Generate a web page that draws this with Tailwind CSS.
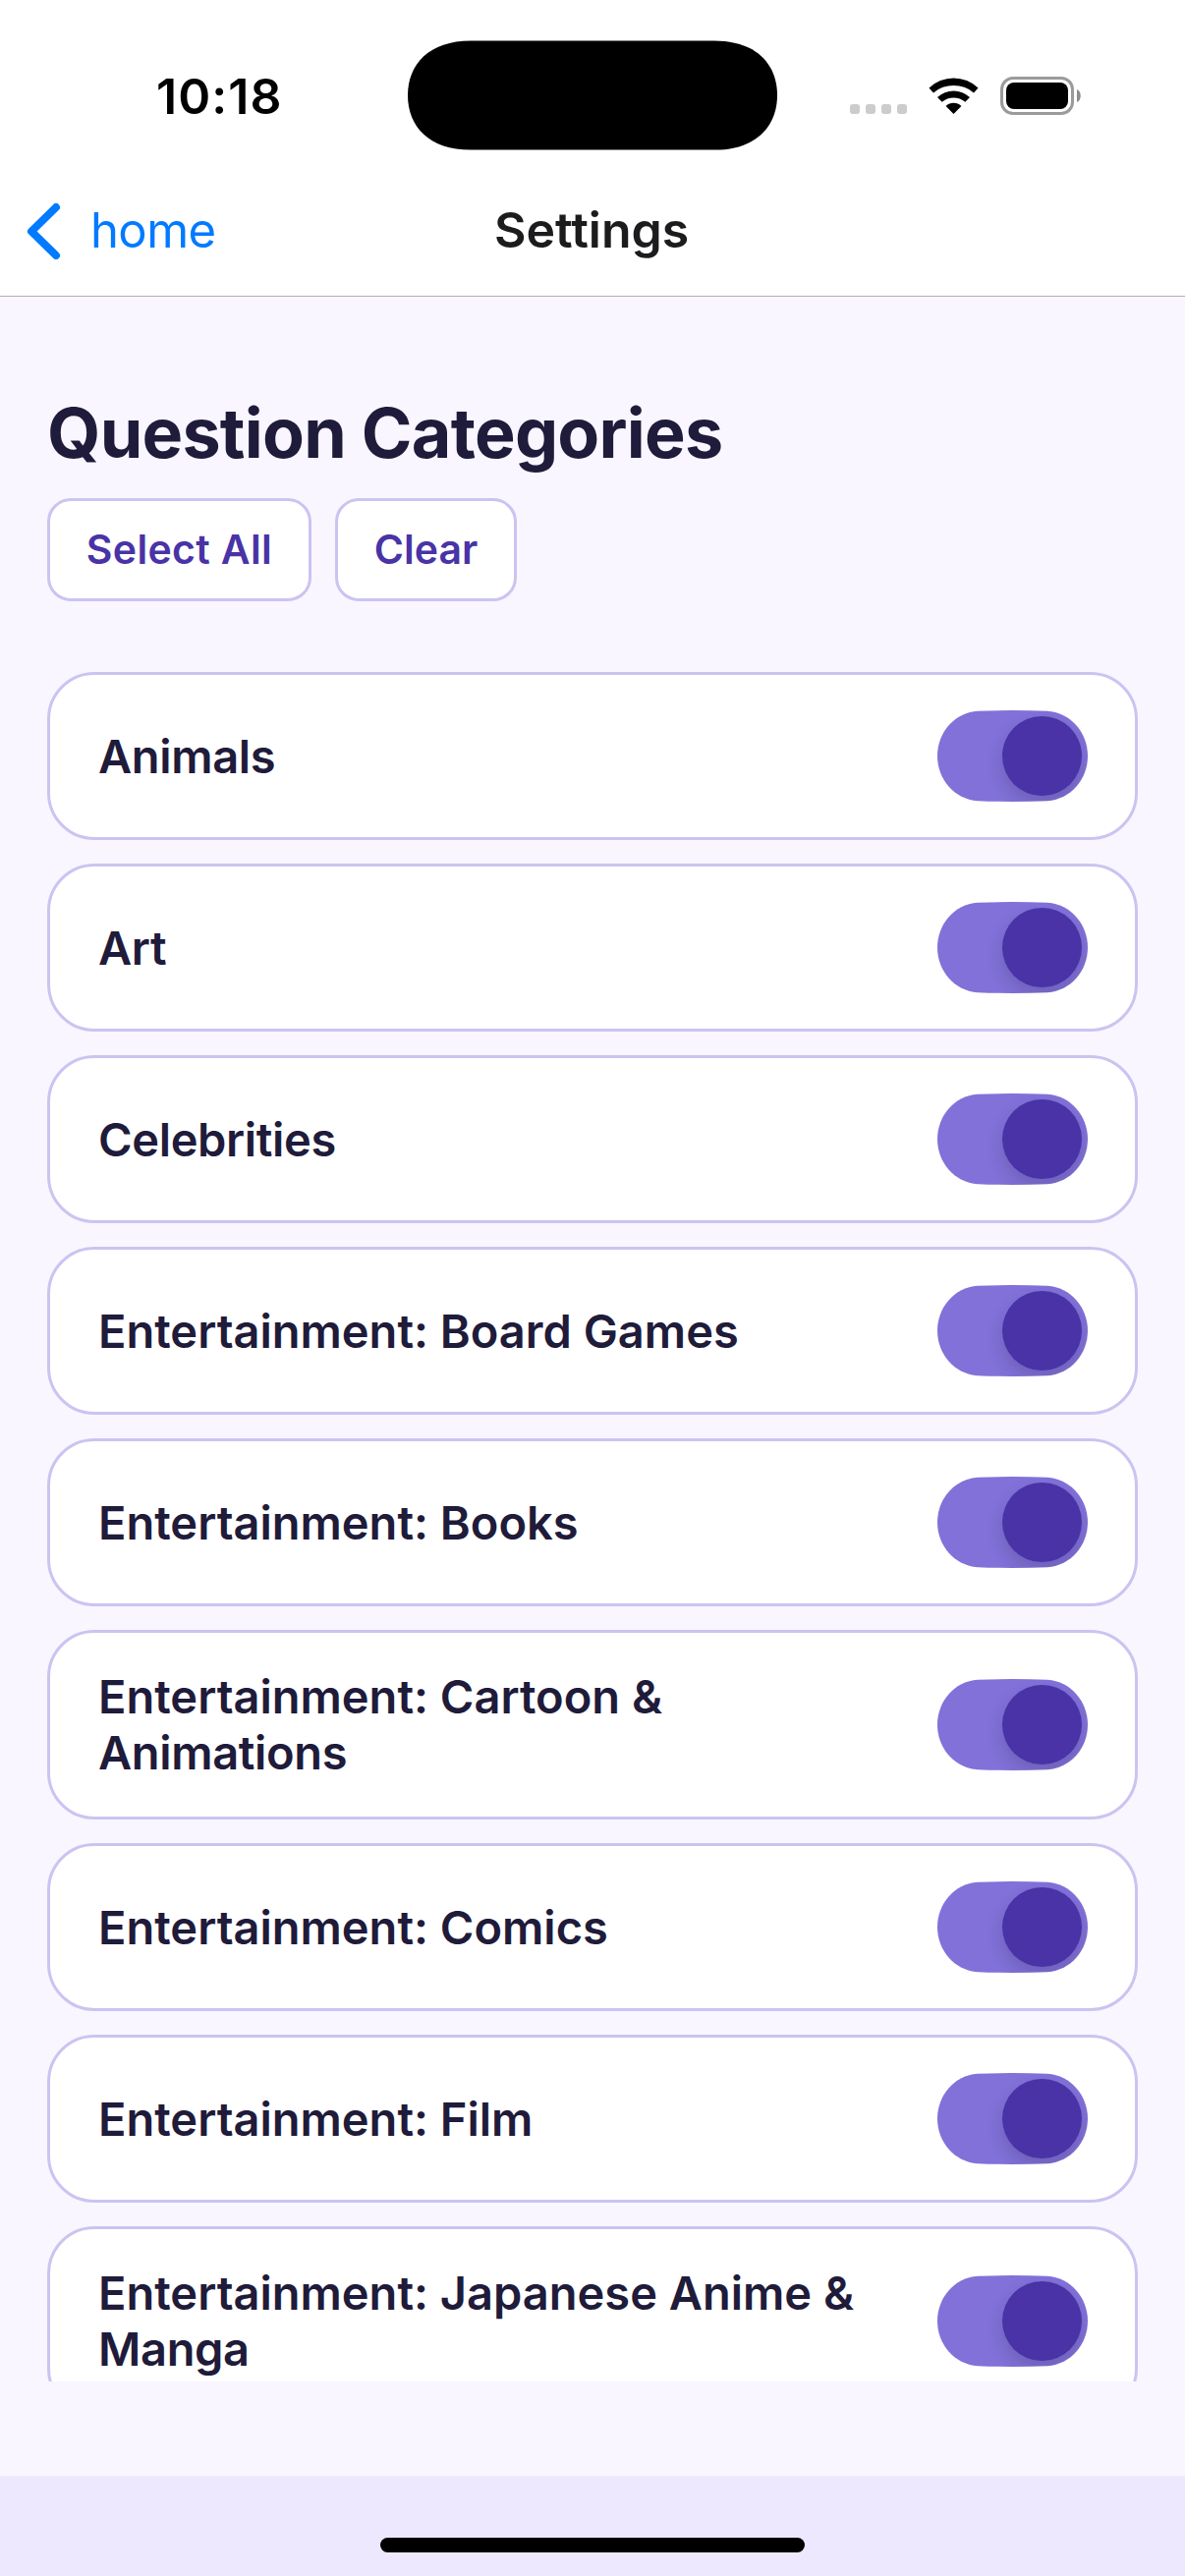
<!DOCTYPE html>
<html lang="en">
<head>
<meta charset="utf-8">
<title>Settings</title>
<script src="https://cdn.jsdelivr.net/npm/@tailwindcss/browser@4"></script>
</head>
<body class="bg-[#f9f6ff]">
<div class="flex h-[2622px] w-[1206px] flex-col overflow-hidden font-['Inter',sans-serif] text-[#1f1b3a]">

  <!-- Status bar -->
  <div class="flex h-[169px] shrink-0 bg-white text-black">
    <div class="w-[415px] pt-[68px] pl-[159px] text-[50px] leading-[60px] font-semibold tracking-[1.1px]">10:18</div>
    <svg class="mt-[41px] h-[112px] w-[376px] shrink-0" viewBox="0 0 376 112"><path d="M0 56C0 24 22 .4 64 .4H312C354 .4 376 24 376 56S354 111.6 312 111.6H64C22 111.6 0 88 0 56Z"/></svg>
    <div class="flex pt-[78px] pl-[74px]">
      <div class="flex gap-[6px] pt-[28px]">
        <span class="size-[10px] rounded-[3px] bg-[#cccccc]"></span>
        <span class="size-[10px] rounded-[3px] bg-[#cccccc]"></span>
        <span class="size-[10px] rounded-[3px] bg-[#cccccc]"></span>
        <span class="size-[10px] rounded-[3px] bg-[#cccccc]"></span>
      </div>
      <svg class="ml-[22px] h-[39px] w-[52px]" viewBox="0 0 52 39">
        <path d="M.5 11.5A36 36 0 0 1 50.5 11.5L46 16.5A31.5 31.5 0 0 0 5 16.5Z"/>
        <path d="M9 21A24 24 0 0 1 42 21L37.3 25.8A18 18 0 0 0 13.7 25.8Z"/>
        <path d="M17.6 30A11.5 11.5 0 0 1 33.4 30L25.5 38Z"/>
      </svg>
      <svg class="ml-[21px] h-[39px] w-[84px]" viewBox="0 0 84 39">
        <rect x="1.5" y="1.5" width="72" height="36" rx="11.5" fill="none" stroke="#9b9b9b" stroke-width="3"/>
        <rect x="6" y="6" width="63" height="27" rx="8"/>
        <path d="M78 13C83 15 83 24 78 26Z" fill="#8c8c8c"/>
      </svg>
    </div>
  </div>

  <!-- Navigation bar -->
  <header class="grid h-[133px] shrink-0 grid-cols-[503px_1fr] items-center border-b border-[#b2b0b8] bg-white text-[50px] leading-[60px]">
    <a class="flex items-center text-[49px] text-[#007aff]">
      <svg class="ml-[27px] h-[58px] w-[35px]" viewBox="0 0 35 58"><path d="M30 5L5 29.5L30 54" fill="none" stroke="#007aff" stroke-width="8" stroke-linecap="round" stroke-linejoin="round"/></svg>
      <span class="ml-[30px] tracking-[-0.6px]">home</span>
    </a>
    <h1 class="pb-[2px] font-semibold text-[#1c1c1e]">Settings</h1>
  </header>

  <!-- Category picker -->
  <main class="flex h-[2218px] shrink-0 flex-col px-12 pt-[98px]">
    <h2 class="text-[70px] leading-[81px] font-bold tracking-[-0.75px] whitespace-nowrap">Question Categories</h2>
    <div class="mt-[26px] flex gap-6 text-[41px] font-semibold text-[#4933a6]">
      <button class="h-[105px] w-[269px] rounded-3xl border-3 border-[#cbc4f1] bg-white tracking-[0.35px]">Select All</button>
      <button class="h-[105px] w-[185px] rounded-3xl border-3 border-[#cbc4f1] bg-white">Clear</button>
    </div>
    <div id="list" class="mt-[72px] flex h-[1740px] shrink-0 flex-col gap-6 overflow-hidden"></div>
  </main>

  <!-- Home indicator -->
  <footer class="flex h-[102px] shrink-0 justify-center bg-[#eee8ff] pt-[63px]">
    <div class="h-[15px] w-[432px] rounded-full bg-black"></div>
  </footer>
</div>

<template id="row">
  <div class="flex shrink-0 items-center justify-between rounded-[48px] border-3 border-[#cbc4f1] bg-white py-9 pr-12 pl-[49px]">
    <div class="label w-[800px] text-[47px] leading-[57px] font-semibold"></div>
    <svg class="h-[93px] w-[153px] shrink-0" viewBox="0 0 153 93">
      <defs>
        <clipPath id="track"><path d="M0 46.5C0 23 17 2.500 41 .8Q76.500 -.6 112 .8C136 2.500 153 23 153 46.500C153 70 136 90.500 112 92.200Q76.500 93.600 41 92.200C17 90.500 0 70 0 46.500Z"/></clipPath>
        <filter id="soft" x="-50%" y="-50%" width="200%" height="200%"><feGaussianBlur stdDeviation="9"/></filter>
      </defs>
      <g clip-path="url(#track)">
        <rect width="153" height="93" fill="#8171d9"/>
        <circle cx="106.500" cy="55" r="40.500" fill="#000" opacity=".15" filter="url(#soft)"/>
        <circle cx="106.500" cy="46.500" r="40.500" fill="#4933a6"/>
      </g>
    </svg>
  </div>
</template>
<script>
  const categories = [
    ['Animals'], ['Art'], ['Celebrities'], ['Entertainment: Board Games'], ['Entertainment: Books'],
    ['Entertainment: Cartoon &', 'Animations'], ['Entertainment: Comics'], ['Entertainment: Film'],
    ['Entertainment: Japanese Anime &', 'Manga']
  ];
  const list = document.getElementById('list');
  const template = document.getElementById('row');
  for (const lines of categories) {
    const row = template.content.cloneNode(true);
    const label = row.querySelector('.label');
    for (const line of lines) {
      const span = document.createElement('span');
      span.className = line.includes(' ') ? 'block' : 'block tracking-[-0.35px]';
      span.textContent = line;
      label.append(span);
    }
    if (lines.length > 1) {
      row.firstElementChild.classList.add('h-[193px]');
      label.classList.add('pb-[2px]');
    }
    list.append(row);
  }
</script>
</body>
</html>
